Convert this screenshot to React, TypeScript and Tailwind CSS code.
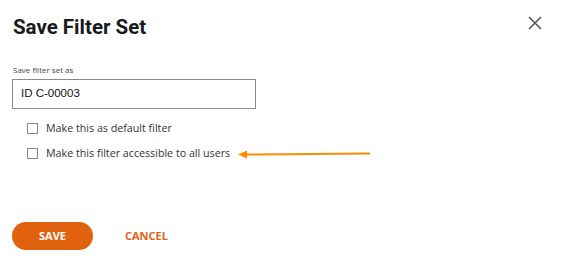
import React from "react";

export default function App() {
  return (
    <div className="w-[562px] h-[263px] bg-white relative overflow-hidden" style={{ fontFamily: '"Open Sans", sans-serif' }}>
      <div className="flex flex-col pl-[12px] pt-[13px]">
        <div className="flex items-start justify-between pr-[20px]">
          <h1 className="text-[20.5px] leading-[28px] font-bold text-[#1a1a1a] pl-[1px]" style={{ fontFamily: "Roboto, sans-serif" }}>
            Save Filter Set
          </h1>
          <svg width="14" height="14" viewBox="0 0 14 14" className="mt-[3px]">
            <path d="M1 1 L13 13 M13 1 L1 13" stroke="#555" strokeWidth="1.6" />
          </svg>
        </div>
        <label className="mt-[24px] text-[8px] leading-[10px] text-[#444] pl-[1px]">Save filter set as</label>
        <div className="mt-[4px] w-[244px] h-[30px] border border-[#8a8a8a] flex items-center pl-[8px] text-[11.5px] text-[#111]" style={{ fontFamily: '"Liberation Sans", Arial, sans-serif' }}>
          ID C-00003
        </div>
        <div className="mt-[14px] pl-[15px] flex flex-col gap-[14px] text-[10.7px] text-[#333]">
          <div className="flex items-center gap-[8px] h-[11px]">
            <span className="w-[11px] h-[11px] border border-[#888] bg-white" />
            <span>Make this as default filter</span>
          </div>
          <div className="flex items-center gap-[8px] h-[11px]">
            <span className="w-[11px] h-[11px] border border-[#888] bg-white" />
            <span>Make this filter accessible to all users</span>
            <svg width="134" height="10" viewBox="0 0 134 10" className="ml-[0px]">
              <path d="M8 5.5 L132 4.5" stroke="#ff8c00" strokeWidth="2" />
              <path d="M0 5.5 L9 1.5 L9 9.5 Z" fill="#ff8c00" />
            </svg>
          </div>
        </div>
        <div className="mt-[63px] flex items-center gap-[32px]">
          <button className="w-[81px] h-[28px] rounded-full bg-[#e0620f] text-white text-[11px] font-bold">SAVE</button>
          <button className="text-[#e0620f] text-[11px] font-bold">CANCEL</button>
        </div>
      </div>
    </div>
  );
}
